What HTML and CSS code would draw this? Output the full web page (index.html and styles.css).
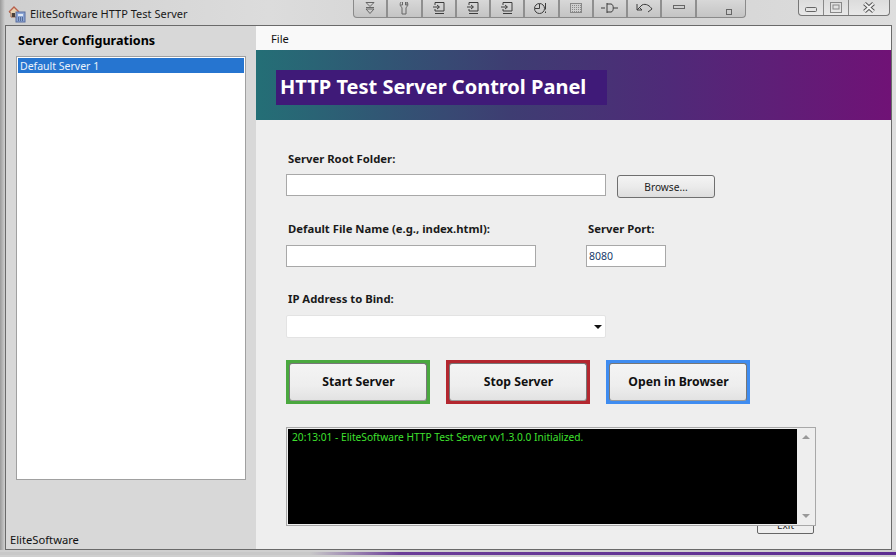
FILE: index.html
```html
<!DOCTYPE html>
<html lang="en">
<head>
<meta charset="utf-8">
<title>EliteSoftware HTTP Test Server</title>
<link rel="stylesheet" href="styles.css">
</head>
<body>
<div class="window">
  <header class="titlebar">
    <svg class="app-icon" width="18" height="18" viewBox="0 0 18 18">
      <path d="M1 7 L6 2 L11 7 L10 8 L10 12 L3 12 L3 8 Z" fill="#e8d2b0" stroke="#a06a50"/>
      <path d="M1 7 L6 2 L11 7" fill="none" stroke="#b8604c" stroke-width="1.4"/>
      <rect x="4" y="8" width="3" height="4" fill="#4a4038"/>
      <rect x="8" y="7" width="9" height="10" fill="#8aa4d4" stroke="#5a6f9f"/>
      <rect x="10" y="9" width="5" height="2" fill="#dfe8f5"/>
      <path d="M10 13h1M12 13h1M14 13h1M10 15h1M12 15h1M14 15h1" stroke="#24365e"/>
    </svg>
    <span class="title-text">EliteSoftware HTTP Test Server</span>
    <div class="toolbar">
      <span class="tool"><svg width="14" height="14" viewBox="0 0 14 14" class="glyph"><path d="M3 1.500h8L7 5.500ZM3 8h8L7 12.500Z"/><path d="M3 6.500h8"/></svg></span>
      <span class="tool"><svg width="14" height="14" viewBox="0 0 14 14" class="glyph"><path d="M4 1C2.500 3 3 5.500 5 6.500V13H9V6.500C11 5.500 11.500 3 10 1V4H8.500V1M5.500 1V4H4"/></svg></span>
      <span class="tool"><svg width="14" height="14" viewBox="0 0 14 14" class="glyph dark"><path d="M3 4V1.500H12V10H3V8M1 6H7M5 4L7.500 6L5 8M3 12.500H12"/></svg></span>
      <span class="tool"><svg width="14" height="14" viewBox="0 0 14 14" class="glyph dark"><path d="M3 4V1.500H12V10H3V8M1 6H7M5 4L7.500 6L5 8M3 12.500H12"/></svg></span>
      <span class="tool"><svg width="14" height="14" viewBox="0 0 14 14" class="glyph dark"><path d="M3 4V1.500H12V10H3V8M1 6H7M5 4L7.500 6L5 8M3 12.500H12"/></svg></span>
      <span class="tool"><svg width="14" height="14" viewBox="0 0 14 14" class="glyph dark"><circle cx="5.500" cy="7.500" r="5"/><path d="M5.500 3V7.500H1M11.500 2V8.500M11.500 10.500V12"/></svg></span>
      <span class="tool"><svg width="12" height="10" viewBox="0 0 12 10" class="glyph faint">
        <defs><pattern id="dots" width="2" height="2" patternUnits="userSpaceOnUse"><rect width="2" height="2" fill="#cfcfcf" stroke="none"/><rect width="1" height="1" fill="#8a8a8a" stroke="none"/></pattern></defs>
        <rect x=".5" y=".5" width="11" height="9" fill="url(#dots)"/></svg></span>
      <span class="tool"><svg width="18" height="12" viewBox="0 0 18 12" class="glyph dark"><path d="M0 6H4M6 1V11M6 2H10C13 2 13 10 10 10H6M12.500 6H17"/></svg></span>
      <span class="tool"><svg width="18" height="12" viewBox="0 0 18 12" class="glyph dark"><path d="M2 2V8H7L5 6M2 8L7 3C11 1 15 4 17 7L13 10"/></svg></span>
      <span class="tool"><svg width="12" height="6" viewBox="0 0 12 6" class="glyph"><rect x=".5" y=".5" width="11" height="3"/></svg></span>
      <span class="tool tool-low"><svg width="6" height="6" viewBox="0 0 6 6" class="glyph"><rect x=".5" y=".5" width="5" height="5"/></svg></span>
    </div>
    <div class="controls">
      <span class="ctl ctl-min"><svg width="12" height="6" viewBox="0 0 12 6" class="glyph"><rect x=".5" y=".5" width="11" height="4" rx="1"/></svg></span>
      <span class="ctl ctl-max"><svg width="12" height="11" viewBox="0 0 12 11" class="glyph faint"><rect x=".5" y=".5" width="11" height="10"/><rect x="3" y="3" width="6" height="4"/></svg></span>
      <span class="ctl ctl-close"><svg width="12" height="11" viewBox="0 0 12 11"><path class="close-out" d="M1.500 1.500L10.500 9.500M10.500 1.500L1.500 9.500"/><path class="close-in" d="M1.500 1.500L10.500 9.500M10.500 1.500L1.500 9.500"/></svg></span>
    </div>
  </header>

  <div class="client">
    <aside class="sidebar">
      <h2 class="side-title">Server Configurations</h2>
      <ul class="server-list">
        <li class="server-item">Default Server 1</li>
      </ul>
      <div class="status">EliteSoftware</div>
    </aside>

    <main class="content">
      <nav class="menubar"><span class="menu-item">File</span></nav>
      <div class="banner"><h1 class="banner-title">HTTP Test Server Control Panel</h1></div>

      <form class="form">
        <label class="label label-root">Server Root Folder:</label>
        <div class="row row-root">
          <div class="field field-wide"></div>
          <button type="button" class="browse">Browse...</button>
        </div>

        <div class="row row-labels">
          <label class="label label-file">Default File Name (e.g., index.html):</label>
          <label class="label label-port">Server Port:</label>
        </div>
        <div class="row row-file">
          <div class="field field-file"></div>
          <div class="field field-port">8080</div>
        </div>

        <label class="label label-ip">IP Address to Bind:</label>
        <div class="select"><span class="select-arrow"></span></div>

        <div class="actions">
          <div class="ring ring-green"><button type="button" class="action">Start Server</button></div>
          <div class="ring ring-red"><button type="button" class="action">Stop Server</button></div>
          <div class="ring ring-blue"><button type="button" class="action">Open in Browser</button></div>
        </div>

        <div class="log-wrap">
          <button type="button" class="exit">Exit</button>
          <div class="log">
            <div class="log-text">20:13:01 - EliteSoftware HTTP Test Server vv1.3.0.0 Initialized.</div>
            <div class="scrollbar"><span class="arrow-up"></span><span class="arrow-down"></span></div>
          </div>
        </div>
      </form>
    </main>
  </div>
  <div class="bottom-edge"></div>
</div>
</body>
</html>
```

FILE: styles.css
```css
* { box-sizing: border-box; }
html, body { margin: 0; padding: 0; }
body {
  width: 896px;
  height: 557px;
  overflow: hidden;
  font-family: "Noto Sans", "Open Sans", sans-serif;
  font-size: 11.2px;
  color: #111;
}
.window {
  width: 896px;
  height: 557px;
  display: flex;
  flex-direction: column;
  background: linear-gradient(90deg, #9a9a9a 0, #cfcfcf 5px, #dcdcdc 30%, #cfcfcf 60%, #dedede 100%);
}
.titlebar {
  height: 25px;
  flex: none;
  display: flex;
  align-items: flex-start;
  position: relative;
}
.app-icon { margin: 5px 0 0 8px; flex: none; }
.title-text {
  margin: 6px 0 0 4px;
  font-size: 11px;
  line-height: 16px;
  color: #1a1a1a;
  width: 323px;
  white-space: nowrap;
}
.toolbar {
  display: flex;
  height: 18px;
  border: 1px solid #8a8a8a;
  border-top: 0;
  border-radius: 0 0 4px 4px;
  background: linear-gradient(#d8d8d8, #c4c4c4);
  width: 393px;
}
.tool {
  flex: 1;
  display: flex;
  align-items: center;
  justify-content: center;
  border-right: 2px solid #8f8f8f;
  padding-bottom: 2px;
}
.tool:last-child { border-right: 0; }
.tool-low { align-items: flex-end; padding: 0 0 2px 16px; }
.glyph { fill: none; stroke: #666; stroke-width: 1; }
.dark { stroke: #3c3c3c; }
.faint { stroke: #888; }
.close-out { fill: none; stroke: #555; stroke-width: 4; }
.close-in { fill: none; stroke: #f2f2f2; stroke-width: 2; }
.controls {
  margin-left: 52px;
  display: flex;
  height: 16px;
  width: 92px;
  border: 1px solid #777;
  border-top: 0;
  border-radius: 0 0 4px 4px;
  background: linear-gradient(#dcdcdc, #e8e8e8);
}
.ctl { display: flex; align-items: center; justify-content: center; border-right: 1px solid #888; }
.ctl:last-child { border-right: 0; }
.ctl-min { width: 25px; padding-top: 4px; }
.ctl-max { width: 25px; }
.ctl-close { flex: 1; }

.client {
  flex: 1;
  display: flex;
  margin: 0 4px 0 5px;
  border: 1px solid #6a6a6a;
  min-height: 0;
}
.sidebar {
  width: 250px;
  flex: none;
  background: #d8d8d8;
  display: flex;
  flex-direction: column;
  padding: 0 10px 0 10px;
}
.side-title {
  margin: 6px 0 0 2px;
  font-size: 12.6px;
  line-height: 18px;
  font-weight: 700;
  color: #000;
}
.server-list {
  list-style: none;
  margin: 6px 0 0 0;
  padding: 1px;
  height: 424px;
  background: #fff;
  border: 1px solid #a0a0a0;
}
.server-item {
  height: 15px;
  line-height: 16px;
  background: #2675d0;
  color: #eaf2fb;
  padding-left: 2px;
  font-size: 10.5px;
}
.status {
  margin: 52px 0 0 -6px;
  font-size: 11.2px;
  line-height: 16px;
  color: #111;
}
.content {
  flex: 1;
  display: flex;
  flex-direction: column;
  background: #eeeeee;
  min-width: 0;
}
.menubar {
  height: 24px;
  flex: none;
  background: #f9f9f9;
  padding: 5px 0 0 15px;
  line-height: 16px;
  font-size: 11.2px;
}
.banner {
  height: 70px;
  flex: none;
  padding: 20px 0 0 20px;
  background: linear-gradient(90deg, #246f76 0, #3e3d72 40%, #4f2a78 65%, #701276 100%);
}
.banner-title {
  margin: 0;
  width: 331px;
  height: 35px;
  background: #3f1a78;
  color: #fff;
  font-size: 20px;
  line-height: 33px;
  font-weight: 700;
  padding-left: 4px;
  white-space: nowrap;
}
.form { flex: 1; padding: 30px 0 0 30px; display: flex; flex-direction: column; }
.label { font-weight: 700; font-size: 11.3px; line-height: 17px; color: #1a1a1a; display: block; margin-bottom: 1px; }
.label-root { margin-left: 2px; }
.row { display: flex; }
.row-root { margin-top: 6px; align-items: flex-start; }
.field { height: 22px; background: #fff; border: 1px solid #a8a8a8; line-height: 20px; }
.field-wide { width: 320px; }
.browse {
  margin: 1px 0 0 11px;
  width: 98px;
  height: 23px;
  font: inherit;
  font-size: 10.2px;
  color: #222;
  background: linear-gradient(#f4f4f4, #ebebeb 50%, #dddddd);
  border: 1px solid #6f6f6f;
  border-radius: 3px;
  padding: 0;
}
.row-labels { margin-top: 22px; }
.label-file { margin-left: 2px; width: 300px; }
.row-file { margin-top: 7px; }
.field-file { width: 250px; }
.field-port { width: 80px; margin-left: 50px; padding-left: 2px; font-size: 10.5px; color: #163a6a; }
.label-ip { margin: 23px 0 1px 2px; }
.select {
  margin-top: 7px;
  width: 320px;
  height: 23px;
  background: #fff;
  border: 1px solid #e3e3e3;
  border-radius: 2px;
  position: relative;
}
.select-arrow {
  position: absolute;
  right: 3px;
  top: 9px;
  border-left: 4px solid transparent;
  border-right: 4px solid transparent;
  border-top: 4px solid #111;
}
.actions { display: flex; gap: 16px; margin-top: 22px; }
.ring { width: 144px; height: 44px; padding: 3px; }
.ring-green { background: #4aa83f; }
.ring-red { background: #b3272f; }
.ring-blue { background: #3f8cf0; }
.action {
  width: 100%;
  height: 100%;
  font: inherit;
  font-weight: 700;
  font-size: 12.2px;
  color: #111;
  background: linear-gradient(#f4f4f4, #eeeeee 60%, #e2e2e2);
  border: 1px solid #777;
  border-bottom-color: #999;
  border-radius: 3px;
  padding: 0 0 2px 1px;
}
.log-wrap { position: relative; margin-top: 23px; width: 530px; height: 99px; }
.log {
  position: relative;
  width: 530px;
  height: 99px;
  background: #eeeeee;
  border: 1px solid #a8a8a8;
  display: flex;
  padding: 1px 0 1px 1px;
}
.log-text {
  width: 509px;
  height: 95px;
  background: #000;
  color: #3fe02f;
  font-size: 10.2px;
  line-height: 14px;
  padding: 1px 0 0 4px;
  white-space: nowrap;
}
.scrollbar { flex: 1; position: relative; }
.arrow-up, .arrow-down {
  position: absolute;
  left: 5px;
  border-left: 4px solid transparent;
  border-right: 4px solid transparent;
}
.arrow-up { top: 6px; border-bottom: 4px solid #999; }
.arrow-down { bottom: 6px; border-top: 4px solid #999; }
.exit {
  position: absolute;
  left: 471px;
  top: 90px;
  width: 57px;
  height: 17px;
  padding: 0;
  background: #eeeeee;
  border: 1px solid #666;
  border-radius: 2px;
  font: inherit;
  font-size: 10px;
  line-height: 9px;
  color: #222;
  text-align: center;
}
.bottom-edge {
  height: 7px;
  flex: none;
  border-top: 2px solid #cfcfcf;
  border-bottom: 2px solid #cfcfcf;
  background: linear-gradient(90deg, #c8c8c8 0, #c8c8c8 310px, #6b3d98 400px, #5c2d91 100%);
}
```
